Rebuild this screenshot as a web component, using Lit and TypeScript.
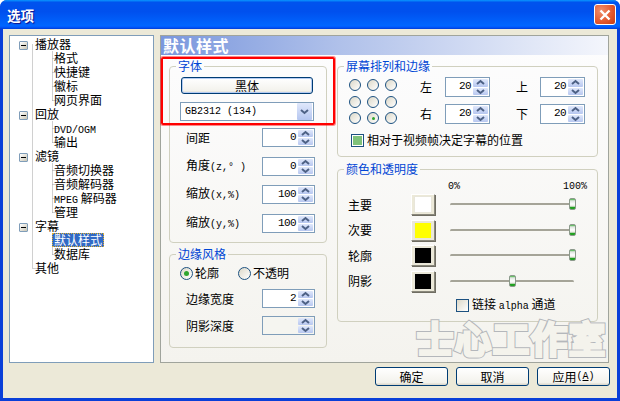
import { LitElement, html, css, svg } from "lit";
import { customElement } from "lit/decorators.js";

const tree: [number, string, boolean?][] = [
  [0, "播放器"], [1, "格式"], [1, "快捷键"], [1, "徽标"], [1, "网页界面"],
  [0, "回放"], [1, "DVD/OGM"], [1, "输出"],
  [0, "滤镜"], [1, "音频切换器"], [1, "音频解码器"], [1, "MPEG 解码器"], [1, "管理"],
  [0, "字幕"], [1, "默认样式", true], [1, "数据库"],
  [0, "其他"],
];

const chevUp = svg`<path d="M1 5 L4.5 2 L8 5" fill="none" stroke="#4d6185" stroke-width="2"/>`;
const chevDown = svg`<path d="M1 2 L4.5 5 L8 2" fill="none" stroke="#4d6185" stroke-width="2"/>`;

@customElement("app-root")
export class AppRoot extends LitElement {
  static styles = css`
    :host { display: block; width: 620px; height: 401px; overflow: hidden; background: #fff;
      font: 12px/14px "Noto Sans CJK SC", sans-serif; color: #000; }
    * { box-sizing: border-box; }
    .la { font: 10px/14px "Liberation Mono", monospace; }
    .win { position: relative; width: 620px; height: 401px; display: flex; flex-direction: column;
      background: #0a3fd8; border-radius: 7px 7px 0 0; overflow: hidden; }
    .title { height: 29px; flex: none; display: flex; align-items: center; justify-content: space-between;
      padding: 0 4px 0 7px;
      background: linear-gradient(to bottom, #0997ff 0, #0053ee 8%, #0050ee 40%, #0066ff 88%, #005bff 93%, #003dd7 100%);
      color: #fff; font-weight: 700; font-size: 13.5px; text-shadow: 1px 1px 1px #0f1089; }
    .close { width: 22px; height: 21px; border: 1px solid #fff; border-radius: 3px;
      background: radial-gradient(circle at 30% 30%, #ef8f6d, #e2562c 60%, #c33c14); display: flex;
      align-items: center; justify-content: center; }
    .body { flex: none; height: 369px; margin: 0 3px; background: #ece9d8; display: flex; flex-direction: column; }
    .main { display: flex; gap: 6px; padding: 6px 0 0 6px; height: 334px; }
    .tree { position: relative; width: 145px; height: 328px; background: #fff; border: 1px solid #7f9db9; padding-top: 1px; }
    .tree svg.lines { position: absolute; left: 0; top: 0; width: 143px; height: 326px; }
    .node { position: relative; height: 14px; white-space: nowrap; display: flex; align-items: center; }
    .node.l0 { padding-left: 25px; }
    .node.l1 { padding-left: 44px; }
    .node span.t { padding: 0 0; height: 14px; }
    .node.sel span.t { background: #316ac5; color: #fff; outline: 1px dotted #e0b030; outline-offset: -1px; padding: 0 2px; margin-left: -2px; }
    .exp { position: absolute; left: 9px; top: 4px; width: 9px; height: 9px; border: 1px solid #7f9db9; border-radius: 1px;
      background: linear-gradient(135deg, #fff, #c9c5b4); display: flex; align-items: center; justify-content: center; }
    .exp i { display: block; width: 5px; height: 1px; background: #000; }
    .page { width: 449px; height: 328px; border: 1px solid #a0a49c;
      background: linear-gradient(to bottom, #fdfdfe, #f4f3ee); }
    .band { height: 19px; padding-left: 2px; font-size: 16px; line-height: 19px; font-weight: 700; color: #fff;
      background: linear-gradient(to right, #7a97dd, #b0c1ea 40%, #f4f6fc); letter-spacing: 0.5px; }
    .cols { display: flex; gap: 10px; padding: 4px 0 0 8px; }
    .col { display: flex; flex-direction: column; }
    .col.a { width: 158px; gap: 4px; }
    .col.b { width: 261px; gap: 5px; }
    fieldset { margin: 0; padding: 0; min-width: 0; border: 1px solid #d0d0bf; border-radius: 4px; }
    legend { margin-left: 6px; padding: 0 2px; color: #0046d5; line-height: 14px; height: 14px; }
    .f1 { height: 184px; } .f2 { height: 101px; } .f3 { height: 98px; } .f4 { height: 160px; }
    .in { padding: 4px 11px 0 10px; display: flex; flex-direction: column; }
    .in.flat { padding-top: 0; }
    .btn { display: flex; align-items: center; justify-content: center; border: 1px solid #003c74; border-radius: 3px;
      background: linear-gradient(to bottom, #fff, #f3f2ec 85%, #d9d4c7); line-height: 14px; }
    .btn.font { height: 17px; width: 132px; margin-left: 1px; box-shadow: inset 0 0 0 1px #b4cbf2; }
    .select { margin-top: 8px; width: 134px; height: 19px; background: #fff; border: 1px solid #7f9db9;
      display: flex; align-items: center; justify-content: space-between; padding: 1px; }
    .select .la { padding-left: 3px; }
    .ddb { width: 15px; height: 17px; background: linear-gradient(to bottom, #e0e8fb, #b5c6f0); border-radius: 1px;
      display: flex; align-items: center; justify-content: center; }
    .rows { margin-top: 7px; display: flex; flex-direction: column; gap: 9.67px; }
    .row { height: 19px; display: flex; align-items: center; justify-content: space-between; padding-left: 6px; }
    .spin { width: 53px; height: 19px; background: #fff; border: 1px solid #7f9db9; display: flex; padding: 1px; flex: none; }
    .spin.wide { width: 45px; height: 20px; }
    .spin.off { background: #f5f5f0; }
    .val { flex: 1; text-align: right; padding-right: 2px; font: 11px/15px "Liberation Mono", monospace; letter-spacing: -0.6px; }
    .arrows { width: 15px; display: flex; flex-direction: column; gap: 1px; }
    .arrows div { flex: 1; background: linear-gradient(to bottom, #e0e8fb, #b7c7f0); border-radius: 1px;
      display: flex; align-items: center; justify-content: center; }
    .arrows svg { width: 9px; height: 7px; display: block; }
    .radios { margin-top: 5px; height: 14px; display: flex; align-items: center; }
    .radio { width: 13px; height: 13px; border-radius: 50%; border: 1px solid #1c5180; flex: none;
      background: linear-gradient(135deg, #dcd8c8, #fff); display: flex; align-items: center; justify-content: center; }
    .radio i { width: 5px; height: 5px; border-radius: 50%; background: #2fa52f; display: block; }
    .rlabel { margin: 0 0 0 2px; width: 43px; }
    .edge { margin-top: 9px; display: flex; flex-direction: column; gap: 8px; }
    .pos { display: flex; padding: 6px 0 0 11px; }
    .grid9 { width: 48px; display: grid; grid-template-columns: repeat(3, 12px); gap: 4.5px 6px; }
    .grid9 .radio { width: 12px; height: 12px; }
    .grid9 .radio i { width: 3px; height: 3px; }
    .margins { margin: -2px 0 0 23px; display: grid; grid-template-columns: 25px 45px 26px 24px 45px; row-gap: 7px; align-items: center; }
    .chk { display: flex; align-items: center; gap: 3px; margin: 9px 0 0 13px; height: 14px; }
    .box { width: 13px; height: 13px; border: 1px solid #1c5180; background: linear-gradient(135deg, #dcd8c8, #fff); flex: none; }
    .box.on { background: #7fc27a; box-shadow: inset 0 0 0 1px #fff; }
    .colors { padding: 5px 13px 0 10px; }
    .scale { height: 12px; margin-left: 100px; display: flex; justify-content: space-between; line-height: 12px; width: 139px; }
    .scale .la { line-height: 12px; }
    .clist { margin-top: 1px; display: flex; flex-direction: column; gap: 4.67px; }
    .crow { height: 21px; display: grid; grid-template-columns: 63px 24px 124px; align-items: center; }
    .swatch { width: 24px; height: 21px; padding: 1px 2px; background: #ece9d8;
      border: 1px solid; border-color: #fff #8a887c #8a887c #fff; box-shadow: 1px 1px 0 #6f6d62; }
    .swatch div { height: 100%; border: 1px solid #e8e6da; }
    .slider { position: relative; height: 3px; margin-left: 15px; width: 124px; border-radius: 2px; background: #a5a498; border-bottom: 1px solid #f8f8f4; }
    .thumb { position: absolute; top: -5px; width: 7px; height: 12px; border-radius: 2px; border: 1px solid #8c9a8c;
      background: linear-gradient(to bottom, #3db13d 0, #dfe5df 18%, #fff 50%, #e6e6de 74%, #21a121 78%, #21a121 100%); }
    .alpha { display: flex; align-items: center; gap: 3px; margin: 7px 0 0 108px; height: 13px; }
    .foot { display: flex; gap: 8px; justify-content: flex-end; padding: 4px 7px 0 0; }
    .foot .btn { width: 73px; height: 19px; }
    u { text-decoration: underline; }
    .mark { position: absolute; left: 417px; top: 315px; font-size: 36px; line-height: 44px; font-weight: 400; letter-spacing: 2px;
      color: #b4b7bb; -webkit-text-stroke: 6px #b4b7bb; white-space: nowrap; }
    .mark::after { content: "士心工作室"; position: absolute; left: 0; top: 0; color: #f4f3ec; -webkit-text-stroke: 4px #f4f3ec; }
    .red { position: absolute; left: 161px; top: 57px; width: 174px; height: 68px; border: 2px solid #f00; border-radius: 2px;
      box-shadow: 0 0 0 1px rgba(255,0,0,.45); }
  `;

  private spin(v: string, extra = "") {
    return html`<div class="spin ${extra}"><div class="val">${v}</div>
      <div class="arrows"><div><svg viewBox="0 0 9 7">${chevUp}</svg></div><div><svg viewBox="0 0 9 7">${chevDown}</svg></div></div></div>`;
  }

  private treeLines() {
    const y = (i: number) => 1 + i * 14 + 7.5;
    let d = `M22.5 ${y(0)} V${y(16)} H32`;
    let start = -1;
    tree.forEach(([lvl], i) => {
      if (lvl === 0) {
        d += ` M27 ${y(i)} H32`;
        start = i;
      } else {
        d += ` M42.5 ${y(i)} H51`;
        const nextIsChild = tree[i + 1] && tree[i + 1][0] === 1;
        if (!nextIsChild) d += ` M42.5 ${y(start) + 7} V${y(i)}`;
      }
    });
    return html`<svg class="lines" viewBox="0 0 143 326"><path d=${d} fill="none" stroke="#a0a0a0" stroke-dasharray="1 1"/></svg>`;
  }

  private colorRow(name: string, color: string, pos: number) {
    return html`<div class="crow"><span>${name}</span>
      <div class="swatch"><div style="background:${color}"></div></div>
      <div class="slider"><div class="thumb" style="left:${pos}px"></div></div></div>`;
  }

  render() {
    const nodes = tree.map(([lvl, name, sel], i) => {
      const hasKids = lvl === 0 && tree[i + 1] && tree[i + 1][0] === 1;
      const latin = /^[A-Z/]+/.exec(name);
      const label = latin
        ? html`<span class="la">${latin[0]}</span>${name.slice(latin[0].length)}`
        : name;
      return html`<div class="node l${lvl} ${sel ? "sel" : ""}">
        ${hasKids ? html`<div class="exp"><i></i></div>` : ""}
        <span class="t">${label}</span></div>`;
    });
    return html`<div class="win">
      <div class="title"><span>选项</span>
        <div class="close"><svg width="12" height="12" viewBox="0 0 12 12"><path d="M1.5 1.5 L10.5 10.5 M10.5 1.5 L1.5 10.5" stroke="#fff" stroke-width="2.4"/></svg></div>
      </div>
      <div class="body">
        <div class="main">
          <div class="tree">${this.treeLines()}${nodes}</div>
          <div class="page">
            <div class="band">默认样式</div>
            <div class="cols">
              <div class="col a">
                <fieldset class="f1"><legend>字体</legend><div class="in">
                  <div class="btn font">黑体</div>
                  <div class="select"><span class="la">GB2312 (134)</span>
                    <div class="ddb"><svg width="9" height="7" viewBox="0 0 9 7">${chevDown}</svg></div></div>
                  <div class="rows">
                    <div class="row"><span>间距</span>${this.spin("0")}</div>
                    <div class="row"><span>角度<span class="la">(z,° )</span></span>${this.spin("0")}</div>
                    <div class="row"><span>缩放<span class="la">(x,%)</span></span>${this.spin("100")}</div>
                    <div class="row"><span>缩放<span class="la">(y,%)</span></span>${this.spin("100")}</div>
                  </div>
                </div></fieldset>
                <fieldset class="f2"><legend>边缘风格</legend><div class="in flat">
                  <div class="radios"><div class="radio"><i></i></div><span class="rlabel">轮廓</span>
                    <div class="radio"></div><span class="rlabel">不透明</span></div>
                  <div class="edge">
                    <div class="row"><span>边缘宽度</span>${this.spin("2")}</div>
                    <div class="row"><span>阴影深度</span>${this.spin("", "off")}</div>
                  </div>
                </div></fieldset>
              </div>
              <div class="col b">
                <fieldset class="f3"><legend>屏幕排列和边缘</legend>
                  <div class="pos">
                    <div class="grid9">${[0, 1, 2, 3, 4, 5, 6, 7, 8].map((i) =>
                      html`<div class="radio">${i === 7 ? html`<i></i>` : ""}</div>`)}</div>
                    <div class="margins">
                      <span>左</span>${this.spin("20", "wide")}<span></span><span>上</span>${this.spin("20", "wide")}
                      <span>右</span>${this.spin("20", "wide")}<span></span><span>下</span>${this.spin("20", "wide")}
                    </div>
                  </div>
                  <div class="chk"><div class="box on"></div><span>相对于视频帧决定字幕的位置</span></div>
                </fieldset>
                <fieldset class="f4"><legend>颜色和透明度</legend>
                  <div class="colors">
                    <div class="scale"><span class="la">0%</span><span class="la">100%</span></div>
                    <div class="clist">
                      ${this.colorRow("主要", "#ffffff", 119)}
                      ${this.colorRow("次要", "#ffff00", 119)}
                      ${this.colorRow("轮廓", "#000000", 119)}
                      ${this.colorRow("阴影", "#000000", 59)}
                    </div>
                    <div class="alpha"><div class="box"></div><span>链接 <span class="la">alpha</span> 通道</span></div>
                  </div>
                </fieldset>
              </div>
            </div>
          </div>
        </div>
        <div class="foot">
          <div class="btn">确定</div><div class="btn">取消</div>
          <div class="btn">应用<span class="la">(<u>A</u>)</span></div>
        </div>
      </div>
      <div class="mark">士心工作室</div>
      <div class="red"></div>
    </div>`;
  }
}
